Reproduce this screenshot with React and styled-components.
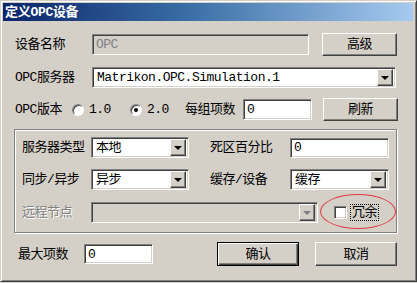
import React from "react";
import styled, { createGlobalStyle, css } from "styled-components";

const Colors = {
  face: "#D4D0C8",
  light: "#FFFFFF",
  shadow: "#808080",
  dark: "#404040",
  text: "#000000",
  disabled: "#808080",
};

const GlobalStyle = createGlobalStyle`
  html, body {
    margin: 0;
    padding: 0;
    background: ${Colors.face};
  }
  body {
    font-family: "Liberation Mono", "Noto Sans CJK SC", monospace;
    font-size: 13px;
    letter-spacing: -0.5px;
    color: ${Colors.text};
  }
`;

const sunken = css`
  box-sizing: border-box;
  border-style: solid;
  border-width: 1px;
  border-color: ${Colors.shadow} ${Colors.light} ${Colors.light} ${Colors.shadow};
  box-shadow: inset 1px 1px 0 ${Colors.dark}, inset -1px -1px 0 ${Colors.face};
`;

const raised = css`
  box-sizing: border-box;
  border-style: solid;
  border-width: 1px;
  border-color: ${Colors.light} ${Colors.dark} ${Colors.dark} ${Colors.light};
  box-shadow: inset -1px -1px 0 ${Colors.shadow};
  background: ${Colors.face};
`;

const Combo = ({ value, width, disabled }) => (
  <ComboBox $width={width} $disabled={disabled}>
    <ComboText>{value}</ComboText>
    <ArrowButton $disabled={disabled} />
  </ComboBox>
);

const App = () => {
  return (
    <>
      <GlobalStyle />
      <Window>
        <TitleBar>定义OPC设备</TitleBar>

        <Body>
          <Row $height={23}>
            <Label $width={77}>设备名称</Label>
            <TextInput $width={217} $height={21} $disabled>
              OPC
            </TextInput>
            <Button $width={75} $gap={13}>
              高级
            </Button>
          </Row>

          <Row $height={21} $top={11}>
            <Label $width={77}>OPC服务器</Label>
            <Combo width={304} value="Matrikon.OPC.Simulation.1" />
          </Row>

          <Row $height={23} $top={10}>
            <Label $width={57}>OPC版本</Label>
            <RadioItem $width={58}>
              <Radio />
              1.0
            </RadioItem>
            <RadioItem $width={55}>
              <Radio $checked />
              2.0
            </RadioItem>
            <Label $width={58}>每组项数</Label>
            <TextInput $width={69} $height={21}>
              0
            </TextInput>
            <Button $width={75} $gap={11}>
              刷新
            </Button>
          </Row>

          <Group>
            <GroupRow>
              <Label $width={69}>服务器类型</Label>
              <Combo width={98} value="本地" />
              <Label $width={80} $gap={21}>
                死区百分比
              </Label>
              <TextInput $width={99} $height={20}>
                0
              </TextInput>
            </GroupRow>

            <GroupRow $top={11}>
              <Label $width={69}>同步/异步</Label>
              <Combo width={98} value="异步" />
              <Label $width={80} $gap={21}>
                缓存/设备
              </Label>
              <Combo width={99} value="缓存" />
            </GroupRow>

            <GroupRow $top={12}>
              <Label $width={69} $disabled>
                远程节点
              </Label>
              <Combo width={227} value="" disabled />
              <CheckBox />
              <FocusText>冗余</FocusText>
            </GroupRow>
          </Group>

          <Row $height={24} $top={9}>
            <Label $width={66} $gap={3}>
              最大项数
            </Label>
            <TextInput $width={69} $height={20}>
              0
            </TextInput>
            <DefaultButton $width={82} $gap={64}>
              确认
            </DefaultButton>
            <Button $width={82} $gap={16} $height={24}>
              取消
            </Button>
          </Row>
        </Body>

        <Highlight />
      </Window>
    </>
  );
};

const Window = styled.div`
  position: relative;
  box-sizing: border-box;
  width: 417px;
  height: 282px;
  padding: 2px 3px 3px 2px;
  background: ${Colors.face};
  border-style: solid;
  border-width: 1px;
  border-color: ${Colors.face} ${Colors.dark} ${Colors.dark} ${Colors.face};
  box-shadow: inset 1px 1px 0 ${Colors.light}, inset -1px -1px 0 ${Colors.shadow};
  display: flex;
  flex-direction: column;
`;

const TitleBar = styled.div`
  height: 18px;
  display: flex;
  align-items: center;
  padding-left: 2px;
  background: linear-gradient(to right, #0a246a 0%, #3a6ea5 45%, #a6caf0 100%);
  color: #ffffff;
  font-weight: bold;
  font-size: 13px;
  letter-spacing: -0.3px;
  line-height: 1;
`;

const Body = styled.div`
  display: flex;
  flex-direction: column;
  padding: 12px 0 0 12px;
`;

const Row = styled.div`
  display: flex;
  align-items: center;
  height: ${p => p.$height}px;
  margin-top: ${p => p.$top || 0}px;
`;

const Label = styled.div`
  flex: none;
  width: ${p => p.$width}px;
  margin-left: ${p => p.$gap || 0}px;
  white-space: nowrap;
  line-height: 1;
  color: ${p => (p.$disabled ? Colors.disabled : Colors.text)};
  text-shadow: ${p => (p.$disabled ? `1px 1px 0 ${Colors.light}` : "none")};
`;

const TextInput = styled.div`
  ${sunken};
  flex: none;
  width: ${p => p.$width}px;
  height: ${p => p.$height}px;
  padding: 0 0 0 3px;
  display: flex;
  align-items: center;
  line-height: 1;
  background: ${p => (p.$disabled ? Colors.face : Colors.light)};
  color: ${p => (p.$disabled ? Colors.disabled : Colors.text)};
`;

const Button = styled.div`
  ${raised};
  flex: none;
  width: ${p => p.$width}px;
  height: ${p => p.$height || 23}px;
  margin-left: ${p => p.$gap || 0}px;
  display: flex;
  align-items: center;
  justify-content: center;
  line-height: 1;
`;

const DefaultButton = styled(Button)`
  height: 24px;
  border: 1px solid #000000;
  box-shadow: inset 1px 1px 0 ${Colors.light}, inset -1px -1px 0 ${Colors.dark},
    inset -2px -2px 0 ${Colors.shadow};
`;

const ComboBox = styled.div`
  ${sunken};
  flex: none;
  width: ${p => p.$width}px;
  height: 21px;
  padding: 2px;
  display: flex;
  align-items: center;
  background: ${p => (p.$disabled ? Colors.face : Colors.light)};
`;

const ComboText = styled.div`
  flex: 1;
  padding-left: 2px;
  line-height: 1;
  white-space: nowrap;
  overflow: hidden;
`;

const ArrowButton = styled.div`
  ${raised};
  flex: none;
  width: 16px;
  height: 17px;
  position: relative;

  &::after {
    content: "";
    position: absolute;
    left: 3px;
    top: 6px;
    border-style: solid;
    border-width: 4px 4px 0 4px;
    border-color: ${p => (p.$disabled ? Colors.shadow : "#000000")} transparent
      transparent transparent;
  }
`;

const RadioItem = styled.div`
  flex: none;
  width: ${p => p.$width}px;
  display: flex;
  align-items: center;
  gap: 5px;
  line-height: 1;
`;

const Radio = styled.div`
  flex: none;
  width: 12px;
  height: 12px;
  box-sizing: border-box;
  border-radius: 50%;
  background: ${Colors.light};
  border: 1px solid;
  border-color: ${Colors.shadow} ${Colors.light} ${Colors.light} ${Colors.shadow};
  box-shadow: inset 1px 1px 0 ${Colors.dark};
  position: relative;

  &::after {
    content: "";
    display: ${p => (p.$checked ? "block" : "none")};
    position: absolute;
    left: 3px;
    top: 3px;
    width: 4px;
    height: 4px;
    border-radius: 50%;
    background: #000000;
  }
`;

const Group = styled.div`
  box-sizing: border-box;
  width: 383px;
  height: 104px;
  margin: 8px 0 0 -1px;
  padding: 7px 0 0 7px;
  border: 1px solid ${Colors.shadow};
  box-shadow: inset 1px 1px 0 ${Colors.light}, 1px 1px 0 ${Colors.light};
  display: flex;
  flex-direction: column;
`;

const GroupRow = styled.div`
  display: flex;
  align-items: center;
  height: 21px;
  margin-top: ${p => p.$top || 0}px;
`;

const CheckBox = styled.div`
  ${sunken};
  flex: none;
  width: 13px;
  height: 13px;
  margin-left: 16px;
  background: ${Colors.light};
`;

const FocusText = styled.div`
  margin-left: 4px;
  padding: 1px 1px;
  line-height: 1;
  outline: 1px dotted #000000;
`;

const Highlight = styled.div`
  position: absolute;
  left: 319px;
  top: 193px;
  width: 76px;
  height: 35px;
  box-sizing: border-box;
  border: 1px solid #e23a44;
  border-radius: 50%;
  pointer-events: none;
`;

export default App;
